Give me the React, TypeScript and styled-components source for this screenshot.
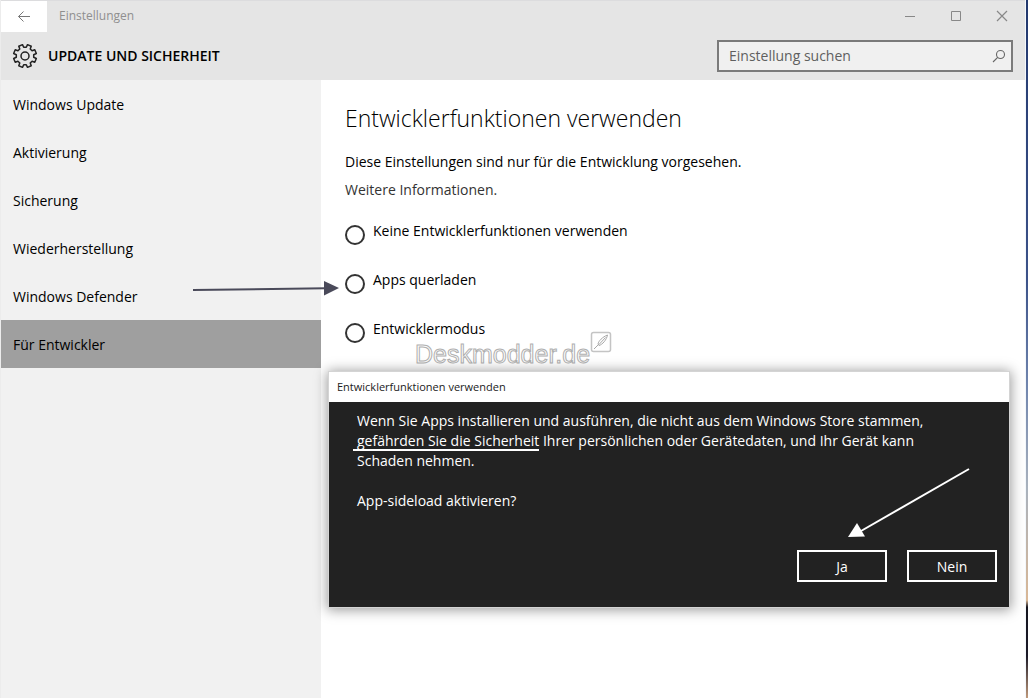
import React from "react";
import styled, { createGlobalStyle } from "styled-components";

const GlobalStyle = createGlobalStyle`
  *, *::before, *::after { box-sizing: border-box; }
  body {
    margin: 0;
    background: #fff;
    color: #000;
    font-family: "Open Sans", "Noto Sans", sans-serif;
    font-size: 14px;
    line-height: 20px;
  }
  button, input { font: inherit; }
  h1, h2, p, ul { margin: 0; padding: 0; font-weight: inherit; }
`;

const Desktop = styled.div`
  min-height: 100vh;
  display: flex;
  padding-right: 2px;
  background: linear-gradient(#22386e 0%, #3c5289 40%, #6f84ad 55%, #a9b2bd 70%, #d9b795 86%, #15151f 87%, #1c1a28 94%, #c09a7c 100%);
`;

const Window = styled.div`
  flex: 1;
  display: flex;
  flex-direction: column;
  border-left: 1px solid #ececec;
  border-right: 1px solid #f4f8fc;
  background: #fff;
`;

const TitleBar = styled.header`
  display: flex;
  align-items: center;
  height: 32px;
  background: #e5e5e5;
  box-shadow: inset 0 1px 0 #dcdcde;
  color: #8f8f8f;
  font-size: 12px;
`;

const BackButton = styled.button`
  display: grid;
  place-items: center;
  width: 46px;
  height: 32px;
  padding: 0;
  border: 0;
  border-top: 1px solid #dcdcde;
  background: #fff;
`;

const AppName = styled.span`
  flex: 1;
  padding-left: 12px;
`;

const CaptionButton = styled.button`
  display: grid;
  place-items: center;
  width: 46px;
  height: 32px;
  padding: 0;
  border: 0;
  background: transparent;
`;

const PageHeader = styled.div`
  display: flex;
  align-items: center;
  height: 48px;
  padding: 0 12px 0 11px;
  background: #e5e5e5;
`;

const PageTitle = styled.h1`
  flex: 1;
  padding-left: 10px;
  font-size: 14px;
  font-weight: 600;
`;

const SearchBox = styled.label`
  display: flex;
  align-items: center;
  width: 296px;
  height: 32px;
  padding: 0 5px 0 10px;
  border: 2px solid #7a7a7a;
  background: #f0f0f0;
`;

const SearchInput = styled.input`
  flex: 1;
  min-width: 0;
  padding: 0;
  border: 0;
  outline: 0;
  background: transparent;
  &::placeholder { color: #5f5f5f; opacity: 1; }
`;

const Body = styled.div`
  flex: 1;
  display: flex;
`;

const Sidebar = styled.nav`
  flex: 0 0 320px;
  background: #f1f1f1;
`;

const NavLink = styled.a<{ $active?: boolean }>`
  display: flex;
  align-items: center;
  height: 48px;
  padding: 2px 12px 0;
  color: #000;
  text-decoration: none;
  background: ${(p) => (p.$active ? "#9f9f9f" : "transparent")};
`;

const Content = styled.main`
  position: relative;
  flex: 1;
  padding: 22px 24px 24px;
`;

const Heading = styled.h2`
  margin-bottom: 18px;
  font-size: 23px;
  line-height: 32px;
  font-weight: 300;
`;

const Intro = styled.p`
  margin-bottom: 8px;
`;

const MoreLink = styled.a`
  display: block;
  margin-bottom: 21px;
  color: #333;
  text-decoration: none;
`;

const Options = styled.div`
  display: flex;
  flex-direction: column;
  gap: 25px;
`;

const Option = styled.label`
  position: relative;
  display: flex;
  gap: 8px;
  height: 24px;
`;

const Radio = styled.input`
  appearance: none;
  flex: none;
  width: 20px;
  height: 20px;
  margin: 4px 0 0;
  border: 2px solid #333;
  border-radius: 50%;
  background: #fff;
`;

const PointerArrow = styled.svg`
  position: absolute;
  right: 100%;
  top: 10px;
  margin-right: 5px;
`;

const Watermark = styled.div`
  position: absolute;
  left: 94px;
  top: 250px;
  display: flex;
  align-items: flex-start;
`;

const WatermarkText = styled.span`
  padding-top: 8px;
  font-family: "Liberation Sans Narrow", "Liberation Sans", sans-serif;
  font-size: 25px;
  line-height: 32px;
  color: #fff;
  -webkit-text-stroke: 1px #b0b0b0;
`;

const Dialog = styled.section`
  position: absolute;
  top: 292px;
  left: 8px;
  right: 16px;
  background: #222;
  color: #fff;
  box-shadow: 0 0 0 1px #d4d4d4, 0 1px 12px 2px rgba(0, 0, 0, 0.4);
`;

const DialogTitle = styled.h2`
  height: 30px;
  padding: 0 8px;
  background: #fff;
  color: #222;
  font-size: 11px;
  line-height: 30px;
`;

const DialogBody = styled.div`
  position: relative;
  padding: 9px 12px 25px 28px;
`;

const Message = styled.p`
  max-width: 592px;
  margin-bottom: 20px;
`;

const Marked = styled.span`
  position: relative;
  &::after {
    content: "";
    position: absolute;
    left: -4px;
    right: 0;
    bottom: -1px;
    height: 2px;
    background: #fff;
  }
`;

const DialogArrow = styled.svg`
  position: absolute;
  top: 65px;
  right: 38px;
`;

const Actions = styled.div`
  display: flex;
  justify-content: flex-end;
  gap: 20px;
  margin-top: 39px;
`;

const ActionButton = styled.button`
  width: 90px;
  height: 32px;
  padding: 2px 0 0;
  border: 2px solid #fff;
  background: transparent;
  color: #fff;
`;

const navItems = [
  "Windows Update",
  "Aktivierung",
  "Sicherung",
  "Wiederherstellung",
  "Windows Defender",
  "Für Entwickler",
];

const options = [
  "Keine Entwicklerfunktionen verwenden",
  "Apps querladen",
  "Entwicklermodus",
];

/* Outline of an eight-toothed cog, as radius / angle pairs per tooth. */
const cogPath = (() => {
  const profile: [number, number][] = [
    [8.8, -14],
    [11.6, -10],
    [11.6, 10],
    [8.8, 14],
  ];
  const points: string[] = [];
  for (let tooth = 0; tooth < 8; tooth++) {
    for (const [radius, offset] of profile) {
      const angle = ((tooth * 45 + 22.5 + offset) * Math.PI) / 180;
      points.push(`${(13 + radius * Math.cos(angle)).toFixed(2)} ${(13 + radius * Math.sin(angle)).toFixed(2)}`);
    }
  }
  return `M${points.join("L")}Z`;
})();

export default function App() {
  return (
    <Desktop>
      <GlobalStyle />
      <Window>
        <TitleBar>
          <BackButton aria-label="Zurück">
            <svg width="14" height="12" viewBox="0 0 14 12" fill="none" stroke="#777">
              <path d="M13 5.5H1.5M6.5 .5L1.5 5.5l5 5" />
            </svg>
          </BackButton>
          <AppName>Einstellungen</AppName>
          <CaptionButton aria-label="Minimieren">
            <svg width="12" height="12" viewBox="0 0 12 12" stroke="#888">
              <path d="M1 6.5h10" />
            </svg>
          </CaptionButton>
          <CaptionButton aria-label="Maximieren">
            <svg width="12" height="12" viewBox="0 0 12 12" fill="none" stroke="#888">
              <path d="M1.5 1.5h9v9h-9z" />
            </svg>
          </CaptionButton>
          <CaptionButton aria-label="Schließen">
            <svg width="12" height="12" viewBox="0 0 12 12" stroke="#888" strokeWidth="1.2">
              <path d="M1 1l10 10M11 1L1 11" />
            </svg>
          </CaptionButton>
        </TitleBar>
        <PageHeader>
          <svg width="26" height="26" viewBox="0 0 26 26" fill="none" stroke="#222" strokeWidth="1.5" strokeLinejoin="round">
            <path d={cogPath} />
            <circle cx="13" cy="13" r="4" />
          </svg>
          <PageTitle>UPDATE UND SICHERHEIT</PageTitle>
          <SearchBox>
            <SearchInput type="text" placeholder="Einstellung suchen" aria-label="Einstellung suchen" />
            <svg width="14" height="14" viewBox="0 0 14 14" fill="none" stroke="#666" strokeWidth="1.1">
              <circle cx="8.5" cy="5.5" r="4" />
              <path d="M5.7 8.3L1 13" />
            </svg>
          </SearchBox>
        </PageHeader>
        <Body>
          <Sidebar>
            {navItems.map((item, i) => (
              <NavLink key={item} href="#" $active={i === navItems.length - 1}>
                {item}
              </NavLink>
            ))}
          </Sidebar>
          <Content>
            <Heading>Entwicklerfunktionen verwenden</Heading>
            <Intro>Diese Einstellungen sind nur für die Entwicklung vorgesehen.</Intro>
            <MoreLink href="#">Weitere Informationen.</MoreLink>
            <Options>
              {options.map((option, i) => (
                <Option key={option}>
                  <Radio type="radio" name="developer-mode" />
                  {option}
                  {i === 1 && (
                    <PointerArrow width="148" height="16" viewBox="0 0 148 16" fill="#4a4a5a">
                      <path d="M1 10L134 8.2" stroke="#4a4a5a" strokeWidth="2" />
                      <path d="M132 1l15 7-15 7.5z" />
                    </PointerArrow>
                  )}
                </Option>
              ))}
            </Options>
            <Watermark>
              <WatermarkText>Deskmodder.de</WatermarkText>
              <svg width="22" height="24" viewBox="0 0 22 24" fill="none" stroke="#a8a8a8">
                <rect x="1.5" y="2.5" width="19" height="19" rx="2" stroke="#c4c4c4" strokeWidth="1.5" />
                <path d="M4 19L8.5 14.5M8 14C8.500 11 12.500 7 17.500 5C16.500 10 12.500 14.500 9 15.500ZM9 14.500L15.500 7.500" />
              </svg>
            </Watermark>
            <Dialog role="dialog" aria-labelledby="dialog-title">
              <DialogTitle id="dialog-title">Entwicklerfunktionen verwenden</DialogTitle>
              <DialogBody>
                <Message>
                  Wenn Sie Apps installieren und ausführen, die nicht aus dem Windows Store stammen,{" "}
                  <Marked>gefährden Sie die Sicherheit</Marked> Ihrer persönlichen oder Gerätedaten, und Ihr Gerät kann
                  Schaden nehmen.
                </Message>
                <Message>App-sideload aktivieren?</Message>
                <Actions>
                  <ActionButton>Ja</ActionButton>
                  <ActionButton>Nein</ActionButton>
                </Actions>
                <DialogArrow width="124" height="72" viewBox="0 0 124 72" fill="#fff">
                  <path d="M122 2L14 64" stroke="#fff" strokeWidth="2" />
                  <path d="M1 70L10 56l8 13.5z" />
                </DialogArrow>
              </DialogBody>
            </Dialog>
          </Content>
        </Body>
      </Window>
    </Desktop>
  );
}
